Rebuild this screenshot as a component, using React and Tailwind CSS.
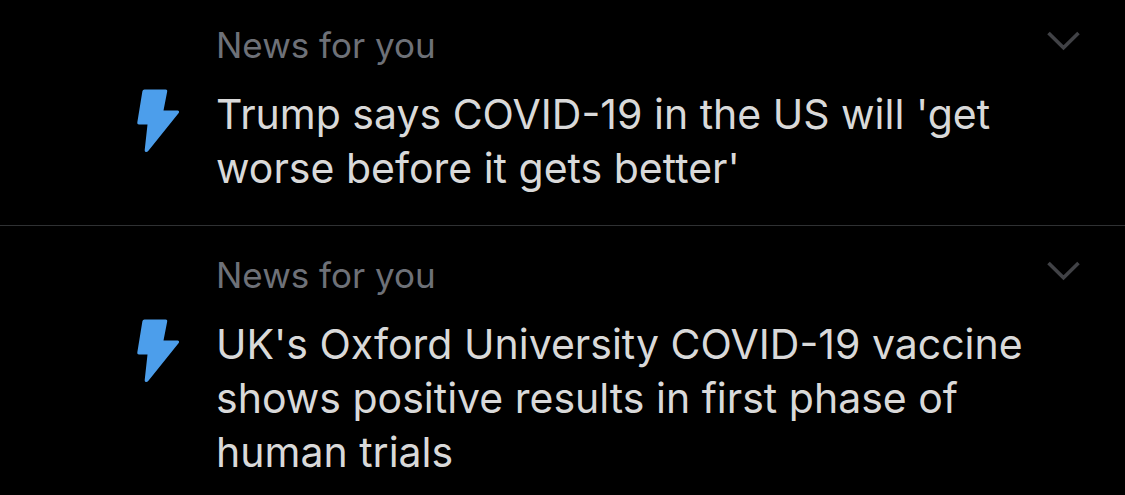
import React, { useState } from "react";

const initialItems = [
  {
    id: 1,
    category: "News for you",
    title: "Trump says COVID-19 in the US will 'get worse before it gets better'",
  },
  {
    id: 2,
    category: "News for you",
    title:
      "UK's Oxford University COVID-19 vaccine shows positive results in first phase of human trials",
  },
];

function BoltIcon() {
  return (
    <svg
      viewBox="0 0 44 66"
      className="h-[66px] w-11"
      fill="#4c9eeb"
      aria-hidden="true"
    >
      <path d="M8.500 1.500H29.500a1.700 1.700 0 0 1 1.700 2.100L27.500 22.500H41.500a1.500 1.500 0 0 1 1.200 2.500L12 63.300c-1.200 1.400-3.500.9-3.300-1.300L11.500 36.500H3a1.700 1.700 0 0 1-1.700-2L6.400 3.300A2.100 2.100 0 0 1 8.500 1.500Z" />
    </svg>
  );
}

function ChevronIcon() {
  return (
    <svg
      viewBox="0 0 36 22"
      className="h-[22px] w-9"
      fill="none"
      stroke="#414246"
      strokeWidth="3.6"
      aria-hidden="true"
    >
      <path d="M3.500 3L18.500 17.800L33.500 3" />
    </svg>
  );
}

export default function NotificationsPage() {
  const [items, setItems] = useState(initialItems);

  const handleDismiss = (id) => {
    setItems((prev) => prev.filter((item) => item.id !== id));
  };

  return (
    <main className="min-h-screen bg-black font-['Inter',sans-serif]">
      {items.map((item) => (
        <article
          key={item.id}
          className="flex border-b border-[#2f3133] pt-7 pr-11 pb-[30px] pl-[136px] first:pt-6"
        >
          {/* bolt */}
          <div className="mt-16 mr-9 shrink-0">
            <BoltIcon />
          </div>

          {/* text */}
          <div className="min-w-0 flex-1">
            <div className="flex items-start justify-between">
              <p className="text-[35px] leading-[42px] text-[#6e7178]">
                {item.category}
              </p>
              <button
                type="button"
                aria-label="Dismiss"
                className="mt-1.5 cursor-pointer"
                onClick={() => handleDismiss(item.id)}
              >
                <ChevronIcon />
              </button>
            </div>
            <h2 className="mt-[21px] text-[41px] leading-[54px] text-[#d9d9d9]">
              {item.title}
            </h2>
          </div>
        </article>
      ))}
    </main>
  );
}
